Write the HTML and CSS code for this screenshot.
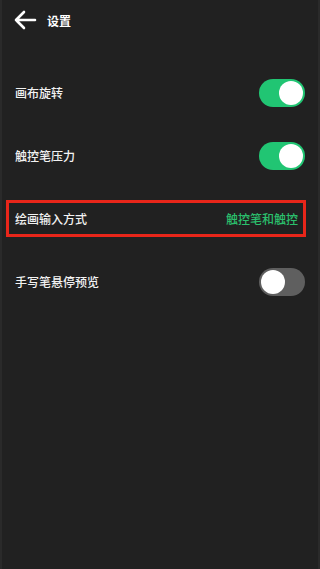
FILE: index.html
```html
<!DOCTYPE html>
<html lang="zh">
<head>
<meta charset="utf-8">
<link rel="stylesheet" href="styles.css">
</head>
<body>
<div class="page">
  <header class="header">
    <svg class="back" width="24" height="20" viewBox="0 0 24 20">
      <path d="M22 10H3M11 2L3 10l8 8" fill="none" stroke="#fff" stroke-width="2.6" stroke-linecap="round" stroke-linejoin="round"/>
    </svg>
    <span class="title">设置</span>
  </header>
  <main class="list">
    <div class="row">
      <span class="label">画布旋转</span>
      <span class="toggle on"><span class="knob"></span></span>
    </div>
    <div class="row">
      <span class="label">触控笔压力</span>
      <span class="toggle on"><span class="knob"></span></span>
    </div>
    <div class="row boxed">
      <div class="box">
        <span class="label">绘画输入方式</span>
        <span class="value">触控笔和触控</span>
      </div>
    </div>
    <div class="row">
      <span class="label">手写笔悬停预览</span>
      <span class="toggle off"><span class="knob"></span></span>
    </div>
  </main>
</div>
</body>
</html>
```

FILE: styles.css
```css
* { box-sizing: border-box; }
html, body {
  margin: 0;
  padding: 0;
  background: #212121;
}
body {
  font-family: "Noto Sans CJK SC", "Noto Sans", sans-serif;
  color: #f0f0f0;
  width: 320px;
  height: 569px;
  overflow: hidden;
}
.page {
  height: 569px;
  border-left: 2px solid #2a2a2a;
  border-right: 2px solid #2a2a2a;
}
.header {
  height: 40px;
  display: flex;
  align-items: center;
  padding-left: 11px;
}
.back { display: block; }
.title {
  margin-left: 10px;
  font-size: 12px;
  font-weight: 700;
  color: #fff;
}
.list {
  padding-top: 21px;
}
.row {
  height: 63px;
  display: flex;
  align-items: center;
  justify-content: space-between;
  padding: 0 13px 0 13px;
}
.label {
  font-size: 12px;
  font-weight: 500;
  color: #f2f2f2;
}
.toggle {
  width: 46px;
  height: 28px;
  border-radius: 14px;
  display: flex;
  align-items: center;
  padding: 0 2px;
}
.toggle.on {
  background: #21c573;
  justify-content: flex-end;
}
.toggle.off {
  background: #5f5f5f;
  justify-content: flex-start;
}
.knob {
  width: 24px;
  height: 24px;
  border-radius: 50%;
  background: #fff;
}
.row.boxed {
  padding: 0 12px 0 4px;
}
.box {
  flex: 1;
  height: 37px;
  border: 3px solid #e8261a;
  display: flex;
  align-items: center;
  justify-content: space-between;
  padding: 0 5px 0 6px;
}
.value {
  font-size: 12px;
  color: #2bbf6c;
  font-weight: 500;
}
```
